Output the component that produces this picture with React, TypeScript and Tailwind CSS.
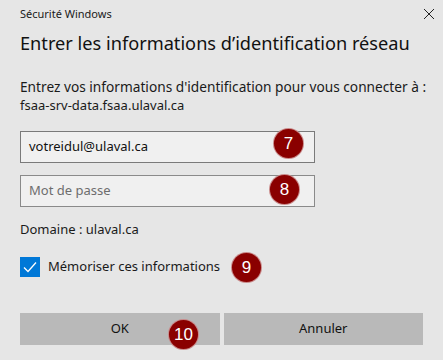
import React from "react";

function Badge({ n, className }: { n: string; className: string }) {
  return (
    <div
      className={
        "absolute flex h-[29px] w-[29px] items-center justify-center rounded-full bg-[#8a0000] text-[17px] text-white ring-1 ring-[#c98a8a] " +
        className
      }
      style={{ fontFamily: '"Liberation Sans", Arial, sans-serif' }}
    >
      {n}
    </div>
  );
}

export default function App() {
  return (
    <div
      className="relative h-[360px] w-[443px] overflow-hidden bg-[#e6e6e6] px-[20px] text-[#000]"
      style={{ fontFamily: '"Noto Sans", "Open Sans", sans-serif' }}
    >
      <div className="flex h-[27px] items-center justify-between">
        <span className="text-[11px] leading-none text-[#1a1a1a]">Sécurité Windows</span>
        <svg width="12" height="12" viewBox="0 0 12 12" className="mr-[-12px]">
          <path d="M1 1 L11 11 M11 1 L1 11" stroke="#222" strokeWidth="1" />
        </svg>
      </div>
      <div className="mt-[2px] whitespace-nowrap text-[18.2px] leading-[28px] text-[#111]">
        Entrer les informations d’identification réseau
      </div>
      <div className="mt-[21px] leading-[18px] text-[#1a1a1a]">
        <div className="whitespace-nowrap text-[13.7px]">Entrez vos informations d'identification pour vous connecter à :</div>
        <div className="text-[13px]">fsaa-srv-data.fsaa.ulaval.ca</div>
      </div>
      <div className="mt-[17px] flex h-[32px] w-[295px] items-center border border-[#7a7a7a] bg-[#f0f0f0] px-[8px] text-[13px] text-[#111]">
        votreidul@ulaval.ca
      </div>
      <div className="mt-[12px] flex h-[32px] w-[295px] items-center border border-[#8a8a8a] bg-[#f0f0f0] px-[8px] text-[13px] text-[#6d6d6d]">
        Mot de passe
      </div>
      <div className="mt-[13px] text-[13px] leading-[18px] text-[#1a1a1a]">Domaine : ulaval.ca</div>
      <div className="mt-[19px] flex items-center gap-[8px]">
        <div className="flex h-[20px] w-[20px] items-center justify-center bg-[#0078d7]">
          <svg width="14" height="12" viewBox="0 0 14 12">
            <path d="M1 6.5 L5 10.5 L13 1.5" stroke="#fff" strokeWidth="1.3" fill="none" />
          </svg>
        </div>
        <span className="text-[13px] text-[#1a1a1a]">Mémoriser ces informations</span>
      </div>
      <div className="mt-[36px] flex gap-[4px]">
        <div className="flex h-[32px] w-[201px] items-center justify-center bg-[#b9b9b9] text-[13px] text-[#111]">
          OK
        </div>
        <div className="flex h-[32px] w-[201px] items-center justify-center bg-[#b9b9b9] text-[13px] text-[#111]">
          Annuler
        </div>
      </div>
      <Badge n="7" className="left-[274px] top-[129px]" />
      <Badge n="8" className="left-[270px] top-[175px]" />
      <Badge n="9" className="left-[232px] top-[253px]" />
      <Badge n="10" className="left-[169px] top-[320px]" />
    </div>
  );
}
